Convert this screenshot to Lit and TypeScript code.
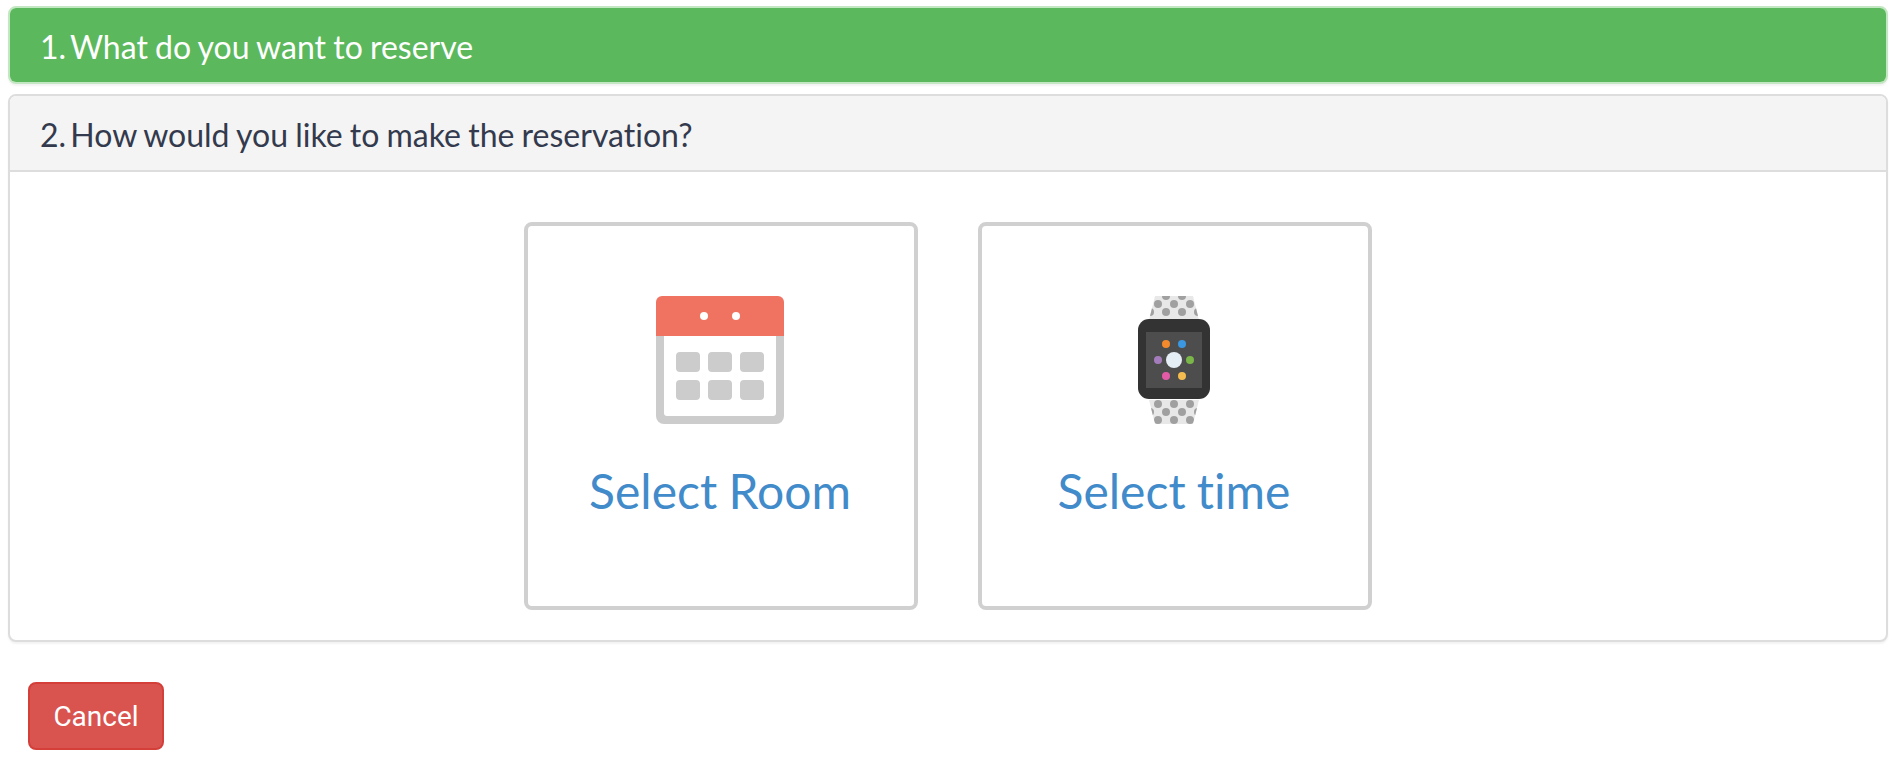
import { LitElement, html, css, svg } from 'lit';
import { customElement } from 'lit/decorators.js';

const calendarSquares = [
    [20, 56], [52, 56], [84, 56],
    [20, 84], [52, 84], [84, 84],
];

const bandDots = [
    [28, 0], [44, 0], [20, 8], [36, 8], [52, 8], [12, 16], [28, 16], [44, 16], [60, 16],
    [20, 108], [36, 108], [52, 108], [12, 116], [28, 116], [44, 116], [60, 116], [20, 124], [36, 124], [52, 124],
];

const appDots = [
    [28, 48, '#f58a2c'], [44, 48, '#3b97e0'],
    [20, 64, '#a57cbb'], [52, 64, '#7ab648'],
    [28, 80, '#e35ba6'], [44, 80, '#f5bd4f'],
];

const calendarIcon = html`
    <svg class="icon" width="128" height="128" viewBox="0 0 128 128">
        <path d="M0 40H128V120a8 8 0 0 1-8 8H8a8 8 0 0 1-8-8Z" fill="#ccc" />
        <path d="M8 40H120V117a3 3 0 0 1-3 3H11a3 3 0 0 1-3-3Z" fill="#fff" />
        <path d="M6 0H122a6 6 0 0 1 6 6V40H0V6A6 6 0 0 1 6 0Z" fill="#f07362" />
        <circle cx="48" cy="20" r="4" fill="#fff" />
        <circle cx="80" cy="20" r="4" fill="#fff" />
        ${calendarSquares.map(([x, y]) => svg`<rect x=${x} y=${y} width="24" height="20" rx="4" fill="#ccc" />`)}
    </svg>
`;

const watchIcon = html`
    <svg class="icon" width="72" height="128" viewBox="0 0 72 128">
        <defs>
            <clipPath id="band">
                <path d="M17 0H55L61 24H11Z" />
                <path d="M11 104H61L55 128H17Z" />
            </clipPath>
        </defs>
        <g clip-path="url(#band)">
            <rect width="72" height="128" fill="#e8e8e8" />
            ${bandDots.map(([x, y]) => svg`<circle cx=${x} cy=${y} r="4" fill="#a0a0a0" />`)}
        </g>
        <rect y="23" width="72" height="80" rx="11" fill="#333" />
        <rect x="8" y="36" width="56" height="56" fill="#4d4d4d" />
        <circle cx="36" cy="64" r="8" fill="#e6eef5" />
        ${appDots.map(([x, y, c]) => svg`<circle cx=${x} cy=${y} r="4" fill=${c} />`)}
    </svg>
`;

@customElement('app-root')
export class AppRoot extends LitElement {
    static styles = css`
        :host {
            display: block;
            padding: 6px 14px 0 8px;
            font-family: 'Lato', sans-serif;
            font-variant-ligatures: none;
            word-spacing: -1px;
            background: #fff;
        }
        .panel {
            border: 2px solid #ddd;
            border-radius: 8px;
            margin-bottom: 10px;
            box-shadow: 0 2px 2px rgba(0,0,0,0.05);
            background: #fff;
            overflow: hidden;
        }
        .panel-heading {
            box-sizing: border-box;
            height: 74px;
            padding: 3px 30px 0;
            font-size: 32px;
            line-height: 71px;
            background: #f4f4f4;
            color: #333a4d;
        }
        .step {
            margin-right: -3px;
        }
        .panel.done {
            border-color: #c3e6c3;
        }
        .panel.done .panel-heading {
            background: #5cb85c;
            color: #fff;
        }
        .panel-body {
            border-top: 2px solid #ddd;
            display: flex;
            justify-content: center;
            gap: 60px;
            padding: 50px 0 30px;
        }
        .choice {
            box-sizing: border-box;
            width: 394px;
            height: 388px;
            border: 4px solid #d0d0d0;
            border-radius: 8px;
            display: flex;
            flex-direction: column;
            align-items: center;
            padding: 70px 2px 0 0;
        }
        .icon {
            display: block;
            filter: blur(0.5px);
        }
        .choice-label {
            margin-top: 37px;
            font-size: 48px;
            line-height: 60px;
            color: #428bca;
        }
        .actions {
            padding: 30px 0 0 20px;
        }
        .btn-cancel {
            box-sizing: border-box;
            width: 136px;
            height: 68px;
            font-family: 'Roboto', sans-serif;
            font-size: 28px;
            color: #fff;
            background: #d9534f;
            border: 2px solid #d43f3a;
            border-radius: 8px;
            padding: 0;
        }
    `;

    render() {
        return html`
            <div class="panel done">
                <div class="panel-heading"><span class="step">1.</span> What do you want to reserve</div>
            </div>
            <div class="panel">
                <div class="panel-heading"><span class="step">2.</span> How would you like to make the reservation?</div>
                <div class="panel-body">
                    <div class="choice">
                        ${calendarIcon}
                        <div class="choice-label">Select Room</div>
                    </div>
                    <div class="choice">
                        ${watchIcon}
                        <div class="choice-label">Select time</div>
                    </div>
                </div>
            </div>
            <div class="actions">
                <button class="btn-cancel">Cancel</button>
            </div>
        `;
    }
}
